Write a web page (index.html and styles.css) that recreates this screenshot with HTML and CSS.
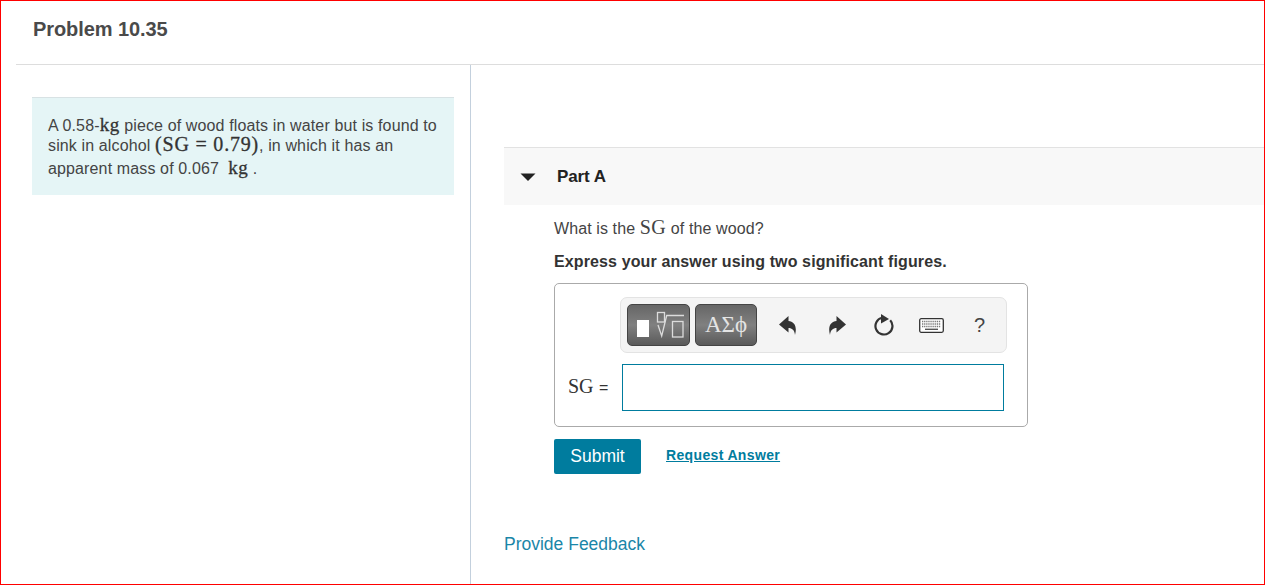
FILE: index.html
```html
<!DOCTYPE html>
<html lang="en">
<head>
<meta charset="utf-8">
<title>Problem 10.35</title>
<link rel="stylesheet" href="styles.css">
</head>
<body>
<div class="frame">
  <header class="top"><h1>Problem 10.35</h1></header>
  <div class="cols">
    <aside class="left">
      <div class="intro">
        <div class="l1">A 0.58-<span class="m mb">kg</span> piece of wood floats in water but is found to</div>
        <div class="l2">sink in alcohol <span class="m mb big">(SG = 0.79)</span>, in which it has an</div>
        <div class="l3">apparent mass of 0.067 &nbsp;<span class="m mb">kg</span> .</div>
      </div>
    </aside>
    <main class="right">
      <div class="part-head">
        <svg class="caret" width="16" height="8" viewBox="0 0 16 8"><path d="M0.500 0.500H15.500L8 8Z" fill="#222"/></svg>
        <span class="part-title">Part A</span>
      </div>
      <div class="part-body">
        <p class="q">What is the <span class="m sg">SG</span> of the wood?</p>
        <p class="instr">Express your answer using two significant figures.</p>
        <div class="answer">
          <div class="toolbar">
            <button class="tb tmpl" type="button" aria-label="Templates">
              <svg width="61" height="40" viewBox="0 0 61 40">
                <rect x="9" y="15" width="12" height="17" fill="#fff"/>
                <g fill="none" stroke="#dcdcdc" stroke-width="1.300">
                  <rect x="29.500" y="7.500" width="7" height="9.500"/>
                  <rect x="44.500" y="16.500" width="10.500" height="15.500"/>
                  <path d="M30 20L33.700 31L38.700 10.500H56"/>
                </g>
              </svg>
            </button>
            <button class="tb greek" type="button">ΑΣϕ</button>
            <svg class="ico undo" width="18" height="19" viewBox="0 0 18 19"><path d="M0 8.500L9.500 0V5C15 5.500 18.500 10 16 19C15.500 14 13 12 9.500 12V16.500Z" fill="#333"/></svg>
            <svg class="ico redo" width="18" height="19" viewBox="0 0 18 19"><path d="M18 8.500L8.500 0V5C3 5.500 -0.500 10 2 19C2.500 14 5 12 8.500 12V16.500Z" fill="#333"/></svg>
            <svg class="ico reset" width="20" height="22" viewBox="0 0 20 22"><path d="M16.200 6.200A8.500 8.500 0 1 1 8 3.700" fill="none" stroke="#333" stroke-width="2.200"/><path d="M7 0L15 5L7 9.500Z" fill="#333"/></svg>
            <svg class="ico kbd" width="25" height="15" viewBox="0 0 25 15">
              <rect x="0.700" y="0.700" width="23.600" height="13.600" rx="1.500" fill="#fff" stroke="#333" stroke-width="1.300"/>
              <path d="M3 3.500H22M3 6H22M3 8.500H22" stroke="#777" stroke-width="1.300" stroke-dasharray="1.300 .8"/>
              <path d="M6 11.300H19" stroke="#555" stroke-width="1.400"/>
            </svg>
            <span class="help">?</span>
          </div>
          <div class="entry">
            <label class="lbl"><span class="m">SG</span> <span class="eq">=</span></label>
            <input class="field" type="text" aria-label="SG">
          </div>
        </div>
        <div class="actions">
          <button class="submit" type="button">Submit</button>
          <a class="req" href="#">Request Answer</a>
        </div>
      </div>
      <a class="feedback" href="#">Provide Feedback</a>
    </main>
  </div>
</div>
</body>
</html>
```
FILE: styles.css
```css
* { box-sizing: border-box; }
html, body { margin: 0; height: 100%; overflow: hidden; }
body { font-family: "Liberation Sans", Arial, sans-serif; color: #333; background: #fff; }
.frame { height: 585px; border: 1px solid #f00; display: flex; flex-direction: column; padding-left: 15px; }
.top { height: 64px; border-bottom: 1px solid #ddd; flex: none; }
.top h1 { margin: 0; padding: 16px 0 0 17px; font-size: 20px; line-height: 24px; font-weight: 700; color: #4a4a4a; letter-spacing: -0.08px; }
.cols { flex: 1; display: flex; min-height: 0; }
.left { width: 455px; flex: none; padding: 32px 16px 0 16px; border-right: 1px solid #c3d0dd; }
.intro { height: 98px; background: #e5f5f6; border-top: 1px solid #d8e2e4; padding: 17px 16px 0; font-size: 16px; color: #444; letter-spacing: 0.13px; }
.l1 { line-height: 19px; height: 19px; white-space: nowrap; }
.l2 { line-height: 19px; height: 21px; white-space: nowrap; margin-top: 1px; }
.l3 { line-height: 23px; height: 23px; white-space: nowrap; }
.m { font-family: "Liberation Serif", "Times New Roman", serif; }
.mb { font-size: 19px; font-weight: 400; color: #333; -webkit-text-stroke: 0.3px #333; letter-spacing: 0.5px; }
.big { font-size: 20px; letter-spacing: 0.8px; }
.right { flex: 1; min-width: 0; padding: 82px 0 0 33px; }
.part-head { height: 58px; background: #f8f8f8; border-top: 1px solid #e2e2e2; display: flex; align-items: center; }
.caret { margin-left: 16px; }
.part-title { margin-left: 21px; padding-top: 1px; font-size: 17px; font-weight: 700; color: #222; letter-spacing: -0.1px; }
.part-body { padding: 0 0 0 50px; }
.q { margin: 11px 0 0; height: 23px; line-height: 23px; font-size: 16px; color: #444; letter-spacing: 0.1px; }
.sg { font-size: 20px; letter-spacing: 0.5px; }
.instr { margin: 13px 0 0; line-height: 20px; font-size: 16px; font-weight: 700; color: #333; letter-spacing: 0.12px; }
.answer { margin-top: 11px; width: 474px; height: 144px; border: 1px solid #aaa; border-radius: 5px; padding: 13px 20px 0 65px; }
.toolbar { width: 387px; height: 56px; background: #f4f4f4; border: 1px solid #e3e3e3; border-radius: 7px; display: flex; align-items: center; padding-left: 6px; }
.tb { width: 62px; height: 42px; margin-right: 5px; padding: 0; border: 1px solid #444; border-radius: 5px; background: linear-gradient(#666, #808080 50%, #5a5a5a); color: #e4e4e4; display: flex; align-items: center; justify-content: center; }
.tmpl { width: 63px; }
.greek { font-family: "Liberation Serif", serif; font-size: 23px; }
.ico { flex: none; }
.undo { margin-left: 17px; }
.redo { margin-left: 31px; }
.reset { margin-left: 28px; }
.kbd { margin-left: 25px; }
.help { margin-left: 30px; font-size: 20px; color: #444; }
.entry { display: flex; align-items: center; margin-top: 11px; margin-left: -54px; }
.lbl { width: 56px; padding: 0 0 2px 2px; white-space: nowrap; font-size: 16px; color: #333; }
.lbl .m { font-size: 20px; }
.eq { margin-left: 1px; }
.field { width: 382px; height: 47px; border: 1px solid #007c9e; background: #fff; padding: 0; }
.actions { display: flex; align-items: center; margin-top: 12px; }
.submit { width: 87px; height: 35px; background: #007c9e; color: #fff; border: 0; border-radius: 2px; padding: 0; font: 400 17.500px "Liberation Sans", sans-serif; }
.req { margin: 0 0 3px 25px; font-size: 14px; font-weight: 700; color: #007c9e; letter-spacing: 0.35px; }
.feedback { display: block; margin-top: 59px; font-size: 17.500px; line-height: 22px; color: #1a86a8; text-decoration: none; }
```
